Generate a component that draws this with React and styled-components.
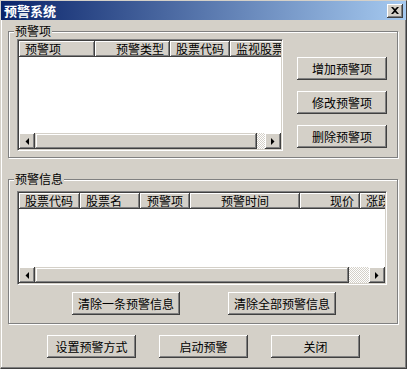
import React from 'react'
import styled, { createGlobalStyle } from 'styled-components'

const GlobalStyle = createGlobalStyle`
    html, body {
        margin: 0;
        padding: 0;
        background: #d4d0c8;
    }
    * {
        box-sizing: border-box;
    }
`

const face = '#d4d0c8'
const raised = `
    background: ${face};
    box-shadow: inset -1px -1px #404040, inset 1px 1px #fff, inset -2px -2px #808080;
`

const topColumns = [
    { label: '预警项', width: 76, align: 'left' },
    { label: '预警类型', width: 75, align: 'right' },
    { label: '股票代码', width: 60, align: 'left' },
    { label: '监视股票', width: 80, align: 'left' },
]

const infoColumns = [
    { label: '股票代码', width: 61, align: 'left' },
    { label: '股票名', width: 60, align: 'left' },
    { label: '预警项', width: 50, align: 'center' },
    { label: '预警时间', width: 110, align: 'center' },
    { label: '现价', width: 60, align: 'right' },
    { label: '涨跌幅', width: 60, align: 'left' },
]

const Arrow = ({ dir }) => (
    <ArrowButton>
        <svg width="4" height="7" viewBox="0 0 4 7">
            {dir === 'left'
                ? <polygon points="4,0 4,7 0.5,3.5" fill="#000" />
                : <polygon points="0,0 0,7 3.5,3.5" fill="#000" />}
        </svg>
    </ArrowButton>
)

const ListView = ({ columns, width, height, thumb }) => (
    <List $w={width} $h={height}>
        <Header>
            {columns.map(c => (
                <HeaderCell key={c.label} $w={c.width} $align={c.align}>{c.label}</HeaderCell>
            ))}
        </Header>
        <Rows />
        <ScrollBar>
            <Arrow dir="left" />
            <Thumb $w={thumb} />
            <Track />
            <Arrow dir="right" />
        </ScrollBar>
    </List>
)

const App = () => {
    return (
        <>
            <GlobalStyle />
            <Window>
                <TitleBar>
                    <Title>预警系统</Title>
                    <CloseButton>
                        <svg width="8" height="7" viewBox="0 0 8 7">
                            <path d="M0 0h2l2 2 2-2h2L5 3.5 8 7H6L4 5 2 7H0l3-3.5z" fill="#000" />
                        </svg>
                    </CloseButton>
                </TitleBar>
                <Body>
                    <Group $h={127} $top={11}>
                        <Legend>预警项</Legend>
                        <GroupInner $pt={7}>
                            <ListView columns={topColumns} width={266} height={112} thumb={222} />
                            <SideButtons>
                                <Button $w={90}>增加预警项</Button>
                                <Button $w={90}>修改预警项</Button>
                                <Button $w={90}>删除预警项</Button>
                            </SideButtons>
                        </GroupInner>
                    </Group>
                    <Group $h={145} $top={21}>
                        <Legend>预警信息</Legend>
                        <GroupColumn>
                            <ListView columns={infoColumns} width={370} height={94} thumb={314} />
                            <ButtonRow>
                                <Button $w={108}>清除一条预警信息</Button>
                                <Button $w={108}>清除全部预警信息</Button>
                            </ButtonRow>
                        </GroupColumn>
                    </Group>
                    <FooterRow>
                        <Button $w={89}>设置预警方式</Button>
                        <Button $w={89}>启动预警</Button>
                        <Button $w={89}>关闭</Button>
                    </FooterRow>
                </Body>
            </Window>
        </>
    )
}

const Window = styled.div`
    width: 407px;
    height: 369px;
    background: ${face};
    border-top: 1px solid ${face};
    border-left: 1px solid ${face};
    border-right: 1px solid #404040;
    border-bottom: 1px solid #404040;
    box-shadow: inset -1px -1px #808080, inset 1px 1px #fff;
    font-family: "Noto Sans CJK SC", "Noto Sans", sans-serif;
    font-size: 12px;
    color: #000;
    overflow: hidden;
`

const TitleBar = styled.div`
    height: 19px;
    display: flex;
    align-items: center;
    padding: 0 3px 0 3px;
    background: linear-gradient(to right, #0a246a, #a6caf0);
`

const Title = styled.div`
    flex: 1;
    color: #fff;
    font-weight: bold;
    font-size: 13px;
    line-height: 15px;
`

const CloseButton = styled.div`
    width: 16px;
    height: 14px;
    display: flex;
    align-items: center;
    justify-content: center;
    ${raised}
    box-shadow: inset -1px -1px #404040, inset 1px 1px #fff, inset -2px -2px #808080;
`

const Body = styled.div`
    padding: 0 0 0 7px;
`

const Group = styled.div`
    position: relative;
    width: 390px;
    height: ${p => p.$h}px;
    margin-top: ${p => p.$top}px;
    border: 1px solid #808080;
    box-shadow: inset 1px 1px #fff, 1px 1px #fff;
`

const Legend = styled.span`
    position: absolute;
    top: -8px;
    left: 5px;
    padding: 0 1px;
    background: ${face};
    line-height: 14px;
`

const GroupInner = styled.div`
    display: flex;
    align-items: flex-start;
    padding: ${p => p.$pt}px 10px 0 8px;
`

const GroupColumn = styled.div`
    display: flex;
    flex-direction: column;
    padding: 11px 10px 0 8px;
`

const SideButtons = styled.div`
    display: flex;
    flex-direction: column;
    gap: 11px;
    margin: 18px 0 0 14px;
`

const ButtonRow = styled.div`
    display: flex;
    gap: 48px;
    margin-top: 7px;
    padding-left: 55px;
`

const FooterRow = styled.div`
    display: flex;
    gap: 23px;
    margin: 11px 0 0 39px;
`

const Button = styled.div`
    width: ${p => p.$w}px;
    height: 23px;
    display: flex;
    align-items: center;
    justify-content: center;
    line-height: 14px;
    ${raised}
`

const List = styled.div`
    width: ${p => p.$w}px;
    height: ${p => p.$h}px;
    flex-shrink: 0;
    display: flex;
    flex-direction: column;
    background: #fff;
    border-top: 1px solid #808080;
    border-left: 1px solid #808080;
    border-right: 1px solid #fff;
    border-bottom: 1px solid #fff;
    box-shadow: inset 1px 1px #404040, inset -1px -1px ${face};
    padding: 1px;
    overflow: hidden;
`

const Header = styled.div`
    display: flex;
    height: 16px;
    flex-shrink: 0;
    overflow: hidden;
`

const HeaderCell = styled.div`
    flex: 0 0 ${p => p.$w}px;
    height: 16px;
    padding: 0 6px;
    line-height: 16px;
    text-align: ${p => p.$align};
    white-space: nowrap;
    overflow: hidden;
    ${raised}
`

const Rows = styled.div`
    flex: 1;
    background: #fff;
`

const ScrollBar = styled.div`
    display: flex;
    height: 16px;
    flex-shrink: 0;
`

const ArrowButton = styled.div`
    width: 16px;
    height: 16px;
    flex-shrink: 0;
    display: flex;
    align-items: center;
    justify-content: center;
    ${raised}
    box-shadow: inset -1px -1px #404040, inset 1px 1px #fff, inset -2px -2px #808080, inset 2px 2px ${face};
`

const Thumb = styled.div`
    width: ${p => p.$w}px;
    flex-shrink: 0;
    ${raised}
    box-shadow: inset -1px -1px #404040, inset 1px 1px ${face}, inset -2px -2px #808080, inset 2px 2px #fff;
`

const Track = styled.div`
    flex: 1;
    background: repeating-conic-gradient(#fff 0 25%, ${face} 0 50%) 0 0 / 2px 2px;
`

export default App
